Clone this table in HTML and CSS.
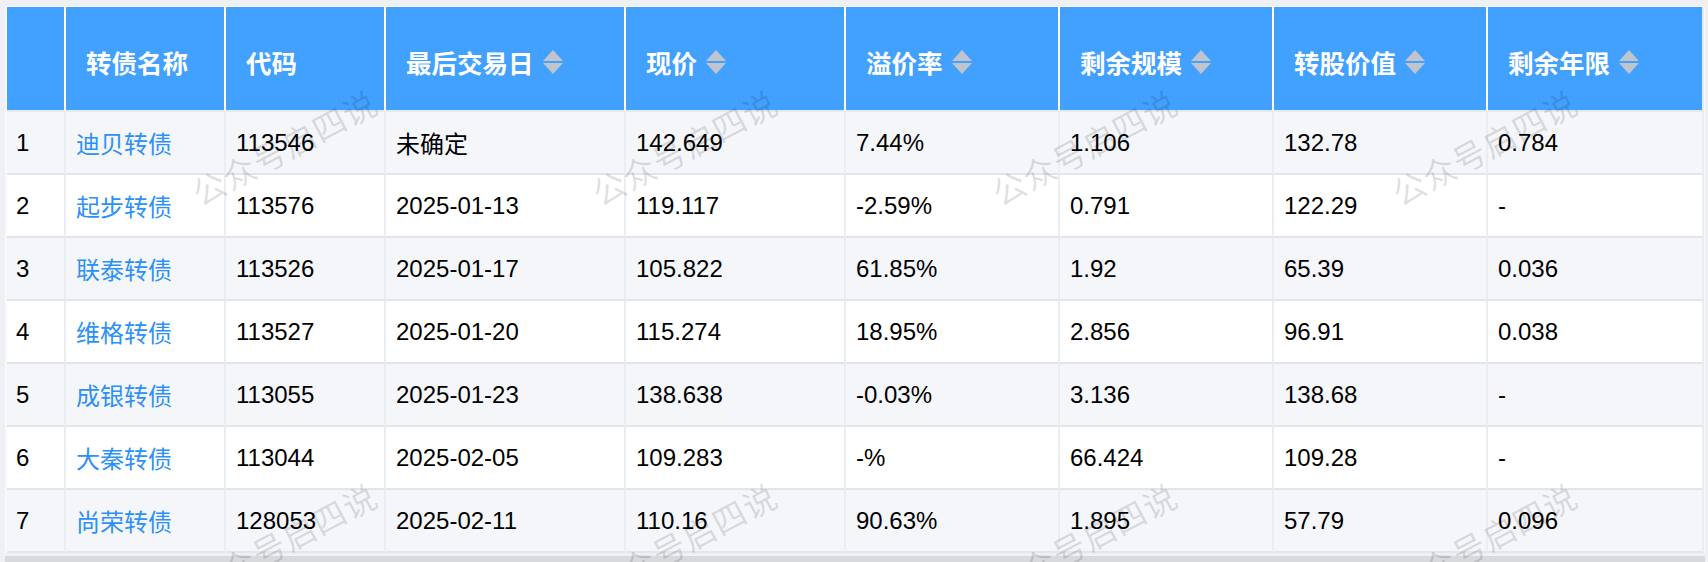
FILE: index.html
```html
<!DOCTYPE html>
<html lang="zh-CN">
<head>
<meta charset="utf-8">
<title>转债</title>
<link rel="stylesheet" href="styles.css">
</head>
<body>
<div class="frame">
  <div class="table-wrap">
    <table class="bond-table">
      <colgroup>
        <col class="c-idx"><col class="c-name"><col class="c-code"><col class="c-date"><col class="c-price"><col class="c-prem"><col class="c-size"><col class="c-value"><col class="c-years">
      </colgroup>
      <thead>
        <tr>
          <th></th>
          <th><span class="th-in">转债名称</span></th>
          <th><span class="th-in">代码</span></th>
          <th><span class="th-in">最后交易日<i class="sort"><b class="up"></b><b class="down"></b></i></span></th>
          <th><span class="th-in">现价<i class="sort"><b class="up"></b><b class="down"></b></i></span></th>
          <th><span class="th-in">溢价率<i class="sort"><b class="up"></b><b class="down"></b></i></span></th>
          <th><span class="th-in">剩余规模<i class="sort"><b class="up"></b><b class="down"></b></i></span></th>
          <th><span class="th-in">转股价值<i class="sort"><b class="up"></b><b class="down"></b></i></span></th>
          <th><span class="th-in">剩余年限<i class="sort"><b class="up"></b><b class="down"></b></i></span></th>
        </tr>
      </thead>
      <tbody>
        <tr class="stripe"><td>1</td><td><a class="link">迪贝转债</a></td><td>113546</td><td>未确定</td><td>142.649</td><td>7.44%</td><td>1.106</td><td>132.78</td><td>0.784</td></tr>
        <tr><td>2</td><td><a class="link">起步转债</a></td><td>113576</td><td>2025-01-13</td><td>119.117</td><td>-2.59%</td><td>0.791</td><td>122.29</td><td>-</td></tr>
        <tr class="stripe"><td>3</td><td><a class="link">联泰转债</a></td><td>113526</td><td>2025-01-17</td><td>105.822</td><td>61.85%</td><td>1.92</td><td>65.39</td><td>0.036</td></tr>
        <tr><td>4</td><td><a class="link">维格转债</a></td><td>113527</td><td>2025-01-20</td><td>115.274</td><td>18.95%</td><td>2.856</td><td>96.91</td><td>0.038</td></tr>
        <tr class="stripe"><td>5</td><td><a class="link">成银转债</a></td><td>113055</td><td>2025-01-23</td><td>138.638</td><td>-0.03%</td><td>3.136</td><td>138.68</td><td>-</td></tr>
        <tr><td>6</td><td><a class="link">大秦转债</a></td><td>113044</td><td>2025-02-05</td><td>109.283</td><td>-%</td><td>66.424</td><td>109.28</td><td>-</td></tr>
        <tr class="stripe"><td>7</td><td><a class="link">尚荣转债</a></td><td>128053</td><td>2025-02-11</td><td>110.16</td><td>90.63%</td><td>1.895</td><td>57.79</td><td>0.096</td></tr>
      </tbody>
    </table>
  </div>
  <div class="scrollbar"></div>
  <div class="watermarks" aria-hidden="true">
    <span class="wm wm-a1">公众号启四说</span>
    <span class="wm wm-a2">公众号启四说</span>
    <span class="wm wm-a3">公众号启四说</span>
    <span class="wm wm-a4">公众号启四说</span>
    <span class="wm wm-b1">公众号启四说</span>
    <span class="wm wm-b2">公众号启四说</span>
    <span class="wm wm-b3">公众号启四说</span>
    <span class="wm wm-b4">公众号启四说</span>
  </div>
</div>
</body>
</html>
```

FILE: styles.css
```css
html, body {
  margin: 0;
  padding: 0;
  background: #ffffff;
}

body {
  font-family: "Liberation Sans", "Noto Sans CJK SC", sans-serif;
  color: #000;
  width: 1708px;
  height: 562px;
  overflow: hidden;
}

.frame {
  position: relative;
  width: 1708px;
  height: 562px;
  box-sizing: border-box;
  background: #eef0f3;
  padding: 6px 3px 0 5px;
  display: flex;
  flex-direction: column;
}

.table-wrap {
  border: 2px solid #f7f8fa;
  border-top-width: 1px;
  border-bottom: none;
  background: #fff;
}

.bond-table {
  border-collapse: separate;
  border-spacing: 0;
  table-layout: fixed;
  width: 1697px;
}

.c-idx { width: 59px; }
.c-name { width: 160px; }
.c-code { width: 160px; }
.c-date { width: 240px; }
.c-price { width: 220px; }
.c-prem { width: 214px; }
.c-size { width: 214px; }
.c-value { width: 214px; }
.c-years { width: 216px; }

.bond-table th {
  height: 105px;
  box-sizing: border-box;
  background: #42a0ff;
  color: #fff;
  font-size: 25.5px;
  font-weight: bold;
  text-align: left;
  padding: 6px 0 0 20px;
  border-right: 2px solid #ffffff;
  border-bottom: 2px solid #e6eaf0;
  white-space: nowrap;
}

.bond-table th:last-child {
  border-right: 2px solid #e6eaf0;
}

.th-in {
  display: inline-flex;
  align-items: center;
}

.sort {
  display: inline-flex;
  flex-direction: column;
  gap: 2px;
  margin-left: 9px;
}

.sort b {
  display: block;
  width: 0;
  height: 0;
  border-left: 10px solid transparent;
  border-right: 10px solid transparent;
}

.sort .up { border-bottom: 11px solid #c0c4cc; }
.sort .down { border-top: 11px solid #c0c4cc; }

.bond-table td {
  height: 63px;
  box-sizing: border-box;
  font-size: 24px;
  padding: 0 0 0 10px;
  border-right: 2px solid #eaedf2;
  border-bottom: 2px solid #e2e6ec;
  white-space: nowrap;
  background: #fff;
}

.bond-table td:first-child {
  padding-left: 9px;
}

.bond-table tr.stripe td {
  background: #f4f6fa;
}

.link {
  color: #2d90f6;
  text-decoration: none;
}

.scrollbar {
  margin-top: 3px;
  height: 6px;
  background: #d8d9db;
}

.watermarks {
  position: absolute;
  inset: 0;
  overflow: hidden;
  pointer-events: none;
}

.wm {
  position: absolute;
  font-family: "Noto Sans CJK SC", sans-serif;
  font-size: 33px;
  letter-spacing: 1px;
  color: rgba(0, 0, 0, 0.12);
  white-space: nowrap;
  transform: translate(-50%, -50%) rotate(-28deg);
}

.wm-a1 { left: 284px; top: 147px; }
.wm-a2 { left: 684px; top: 147px; }
.wm-a3 { left: 1084px; top: 147px; }
.wm-a4 { left: 1484px; top: 147px; }
.wm-b1 { left: 284px; top: 540px; }
.wm-b2 { left: 684px; top: 540px; }
.wm-b3 { left: 1084px; top: 540px; }
.wm-b4 { left: 1484px; top: 540px; }
```
